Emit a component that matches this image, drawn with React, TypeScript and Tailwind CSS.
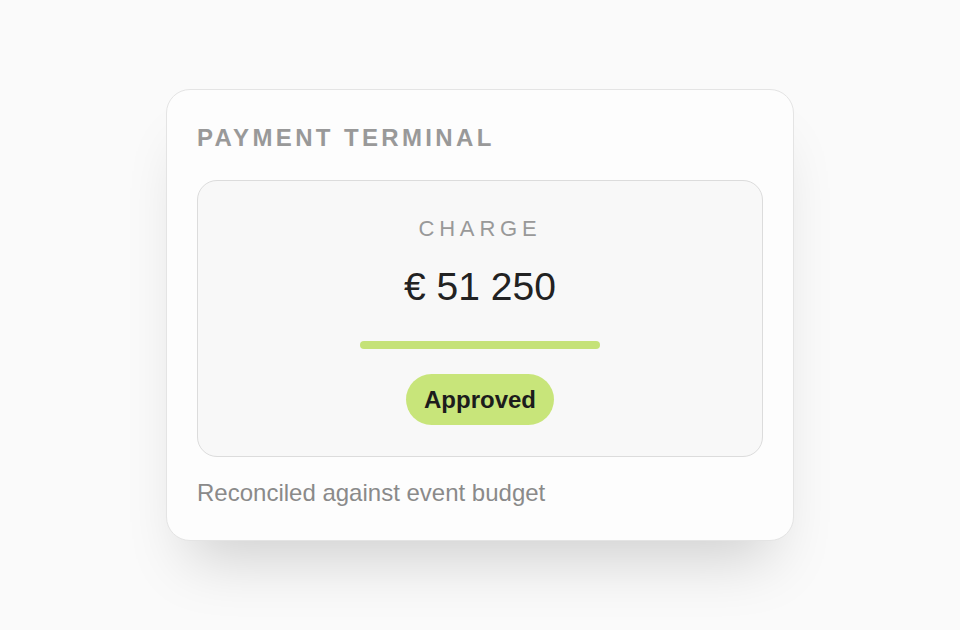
export default function App() {
  return (
    <div
      className="w-[960px] h-[630px] flex items-center justify-center bg-[#fafafa]"
      style={{ fontFamily: '"Liberation Sans", Arial, sans-serif' }}
    >
      <div className="w-[628px] rounded-[24px] border border-[#e4e4e4] bg-[#fdfdfd] px-[30px] pt-[34px] pb-[33px] shadow-[0_40px_60px_-22px_rgba(0,0,0,0.17)]">
        <div className="text-[24px] leading-[28px] font-bold tracking-[0.14em] text-[#999999]">
          PAYMENT TERMINAL
        </div>
        <div className="mt-[28px] rounded-[20px] border border-[#dcdcdc] bg-[#f8f8f8] pt-[35px] pb-[31px] flex flex-col items-center">
          <div className="text-[22px] leading-[26px] tracking-[0.22em] text-[#999999]">
            CHARGE
          </div>
          <div className="mt-[22px] text-[39px] leading-[46px] text-[#222222]">
            € 51 250
          </div>
          <div className="mt-[31px] w-[240px] h-[8px] rounded-full bg-[#c5e278]" />
          <div className="mt-[25px] rounded-full bg-[#c8e57a] px-[18px] py-[7px] text-[24px] leading-[37px] font-bold text-[#1c1c1c]">
            Approved
          </div>
        </div>
        <div className="mt-[22px] text-[24px] leading-[28px] text-[#8a8a8a]">
          Reconciled against event budget
        </div>
      </div>
    </div>
  );
}
